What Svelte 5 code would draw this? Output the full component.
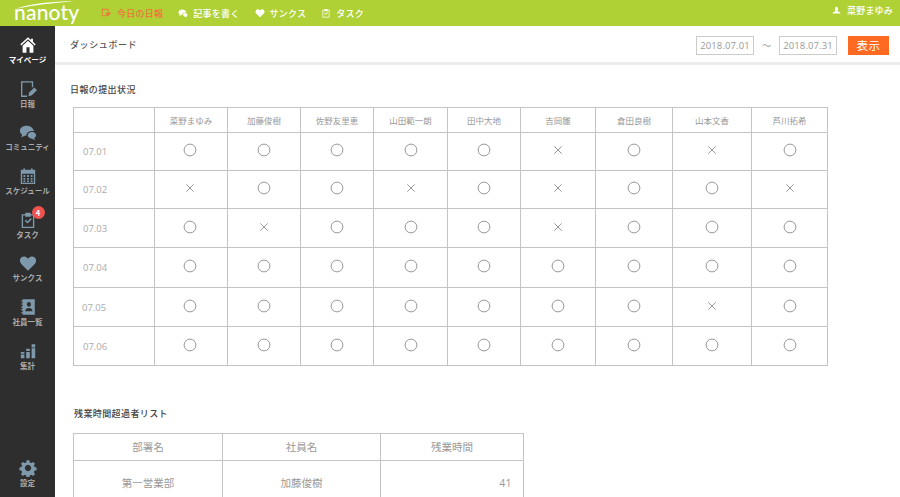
<script>
  const nav = [
    { id: 'home', label: 'マイページ', active: true },
    { id: 'report', label: '日報' },
    { id: 'chat', label: 'コミュニティ' },
    { id: 'cal', label: 'スケジュール' },
    { id: 'task', label: 'タスク', badge: 4 },
    { id: 'heart', label: 'サンクス' },
    { id: 'book', label: '社員一覧' },
    { id: 'bars', label: '集計' }
  ];
  const names = ['菜野まゆみ','加藤俊樹','佐野友里恵','山田範一朗','田中大地','吉岡雛','倉田良樹','山本文香','芦川拓希'];
  const rows = [
    ['07.01', 'oooooxoxo'],
    ['07.02', 'xooxoxoox'],
    ['07.03', 'oxoooxooo'],
    ['07.04', 'ooooooooo'],
    ['07.05', 'oooooooxo'],
    ['07.06', 'ooooooooo']
  ];
</script>

{#snippet icon(id)}
  <svg class="nav-icon" viewBox="0 0 20 20" aria-hidden="true">
    {#if id === 'home'}
      <path d="M10 1.500 1.500 9.300l1.100 1.200L10 3.700l7.400 6.800 1.100-1.200-3-2.800V3h-2.200v1.500Z"/>
      <path fill-rule="evenodd" d="M10 5.300 16 10.800V18.500H4V10.800ZM8.300 12.500v6h3.400v-6Z"/>
    {:else if id === 'report'}
      <path class="line" d="M9 18H3V2h12v6"/>
      <path d="m10.500 18 .8-4 5.700-5.700 3 3-5.700 5.700Z"/>
    {:else if id === 'chat'}
      <path d="M8.500 3C4 3 1 5.500 1 8.700c0 1.800 1 3.300 2.400 4.300L2.600 16l3.600-1.900c.6.100 1.200.2 1.800.2 0-3 2.900-5.500 6.500-5.500.8 0 1.500.1 2.100.3C15.800 5.400 12.500 3 8.500 3Z"/>
      <path d="M14.500 10c-2.800 0-4.800 1.700-4.800 3.700s2 3.700 4.800 3.700l3 1.400-.5-2.300c1.200-.7 2-1.700 2-2.800 0-2-2-3.700-4.500-3.700Z"/>
    {:else if id === 'cal'}
      <path fill-rule="evenodd" d="M2 3h3V1.500h1.500V3h7V1.500H15V3h3v16H2ZM3.500 7.500V17.500h13V7.500Z"/>
      <path d="M5 9h2v2H5ZM9 9h2v2H9ZM13 9h2v2h-2ZM5 12.200h2v2H5ZM9 12.200h2v2H9ZM13 12.200h2v2h-2ZM5 15h2v1.700H5ZM9 15h2v1.700H9ZM13 15h2v1.700h-2Z"/>
    {:else if id === 'task'}
      <path fill-rule="evenodd" d="M3 3.500h4V2h6v1.500h4V19H3ZM4.500 5V17.500h11V5H13v1.500H7V5Z"/>
      <path d="m6.500 11 1.200-1.200 1.800 1.800 3.500-3.700 1.200 1.200-4.700 4.900Z"/>
    {:else if id === 'heart'}
      <path d="M10 18.500 2.500 11C.5 9 .5 5.800 2.400 4c1.900-1.800 4.700-1.700 6.500.1L10 5.200l1.100-1.100c1.800-1.800 4.600-1.900 6.500-.1 1.900 1.800 1.900 5 0 7Z"/>
    {:else if id === 'book'}
      <path fill-rule="evenodd" d="M4 1.500h13.500v17H4V17H2.500v-1.200H4v-2.300H2.500v-1.200H4V10.700H2.500V9.500H4V7.200H2.500V6H4V4H2.500V2.800H4ZM11 4.500a2.300 2.600 0 1 0 .01 0ZM7 14.800h8c0-2.500-1.500-3.600-4-3.600s-4 1.100-4 3.600Z"/>
    {:else if id === 'bars'}
      <path d="M2 11h4v2H2ZM2 14h4v4H2ZM8 7.500h4V10H8ZM8 11h4v7H8ZM14 2.500h4V6h-4ZM14 7h4v11h-4Z"/>
    {:else}
      <path fill-rule="evenodd" d="m8.500 1.500h3l.5 2.300 1.700.7 2-1.300 2.100 2.100-1.300 2 .7 1.700 2.300.5v3l-2.300.5-.7 1.700 1.300 2-2.100 2.100-2-1.300-1.700.7-.5 2.300h-3l-.5-2.300-1.700-.7-2 1.300-2.100-2.100 1.300-2-.7-1.700-2.300-.5v-3l2.300-.5.7-1.700-1.300-2 2.100-2.100 2 1.300 1.700-.7ZM10 6.500a3.500 3.500 0 1 0 .01 0Z"/>
    {/if}
  </svg>
{/snippet}

<div class="app">
  <header class="top">
    <div class="logo">
      <svg class="arc" viewBox="0 0 64 10" aria-hidden="true"><path d="M1 9C18 3 40 1 63 1 40 3 20 5 1 9Z"/></svg>
      <span>nanoty</span>
    </div>
    <nav class="menu">
      <a class="current">
        <svg viewBox="0 0 12 12" aria-hidden="true"><path fill-rule="evenodd" d="M1 1h8v3.500L7 6.500 6 10H1ZM2 2v7h3.300l.8-3L8 4.100V2Z"/><path d="m6.500 10 .6-2.500 3-3 1.800 1.800-3 3Z"/></svg>
        今日の日報
      </a>
      <a>
        <svg viewBox="0 0 20 20" aria-hidden="true"><path d="M8.500 3C4 3 1 5.500 1 8.700c0 1.800 1 3.300 2.400 4.300L2.600 16l3.600-1.900c.6.100 1.200.2 1.800.2 0-3 2.900-5.500 6.500-5.500.8 0 1.500.1 2.100.3C15.800 5.400 12.500 3 8.500 3Z"/><path d="M14.500 10c-2.800 0-4.800 1.700-4.800 3.700s2 3.700 4.800 3.700l3 1.400-.5-2.300c1.200-.7 2-1.700 2-2.800 0-2-2-3.700-4.500-3.700Z"/></svg>
        記事を書く
      </a>
      <a>
        <svg viewBox="0 0 20 20" aria-hidden="true"><path d="M10 18.500 2.500 11C.5 9 .5 5.800 2.400 4c1.900-1.800 4.700-1.700 6.500.1L10 5.200l1.100-1.100c1.800-1.800 4.600-1.900 6.500-.1 1.900 1.800 1.900 5 0 7Z"/></svg>
        サンクス
      </a>
      <a>
        <svg viewBox="0 0 20 20" aria-hidden="true"><path fill-rule="evenodd" d="M3 3.500h4V2h6v1.500h4V19H3ZM4.500 5V17.500h11V5H13v1.500H7V5Z"/><path d="m6.500 11 1.200-1.200 1.800 1.800 3.500-3.700 1.200 1.200-4.700 4.900Z"/></svg>
        タスク
      </a>
    </nav>
    <div class="user">
      <svg viewBox="0 0 12 12" aria-hidden="true"><path d="M6 1a2.300 2.800 0 0 1 1.500 4.700v1.200L11 8.500V10H1V8.500l3.500-1.600V5.700A2.300 2.800 0 0 1 6 1Z"/></svg>
      菜野まゆみ
    </div>
  </header>

  <div class="body">
    <aside class="side">
      <div class="items">
        {#each nav as n}
          <div class="item" class:active={n.active}>
            <div class="icon-wrap">
              {@render icon(n.id)}
              {#if n.badge}<span class="badge">{n.badge}</span>{/if}
            </div>
            <span>{n.label}</span>
          </div>
        {/each}
      </div>
      <div class="item">
        <div class="icon-wrap">{@render icon('gear')}</div>
        <span>設定</span>
      </div>
    </aside>

    <main class="main">
      <div class="bar">
        <h1>ダッシュボード</h1>
        <div class="range">
          <span class="date">2018.07.01</span>
          <span class="tilde">～</span>
          <span class="date">2018.07.31</span>
          <button>表示</button>
        </div>
      </div>

      <section class="content">
        <h2>日報の提出状況</h2>
        <table class="status">
          <colgroup>
            <col class="c0"/><col class="c1"/><col class="c2"/><col class="c3"/><col class="c4"/><col class="c5"/><col class="c6"/><col class="c7"/><col class="c8"/><col class="c9"/>
          </colgroup>
          <thead>
            <tr><th></th>{#each names as name}<th>{name}</th>{/each}</tr>
          </thead>
          <tbody>
            {#each rows as [d, marks]}
              <tr>
                <td class="day">{d}</td>
                {#each marks.split('') as m}
                  <td>
                    {#if m === 'o'}
                      <svg class="mark" viewBox="0 0 14 14" aria-label="○"><circle cx="7" cy="7" r="5.900"/></svg>
                    {:else}
                      <svg class="mark" viewBox="0 0 14 14" aria-label="×"><path d="m3.300 3.300 7.400 7.400M10.700 3.300l-7.400 7.400"/></svg>
                    {/if}
                  </td>
                {/each}
              </tr>
            {/each}
          </tbody>
        </table>

        <h2 class="second">残業時間超過者リスト</h2>
        <table class="over">
          <colgroup><col class="o0"/><col class="o1"/><col class="o2"/></colgroup>
          <thead><tr><th>部署名</th><th>社員名</th><th>残業時間</th></tr></thead>
          <tbody><tr><td>第一営業部</td><td>加藤俊樹</td><td class="num">41</td></tr></tbody>
        </table>
      </section>
    </main>
  </div>
</div>

<style>
  :global(body) { margin: 0; background: #fff; }
  .app {
    width: 900px; height: 497px; overflow: hidden;
    display: flex; flex-direction: column;
    font-family: "Noto Sans CJK JP", "Noto Sans", sans-serif;
    color: #444;
  }
  .top {
    height: 26px; flex: none; background: #b0d136;
    display: flex; align-items: center; color: #fff; box-sizing: border-box;
  }
  .logo {
    width: 101px; flex: none; position: relative; height: 26px;
    padding-left: 14px; box-sizing: border-box;
  }
  .logo span {
    font-family: "Lato", "Open Sans", sans-serif;
    font-size: 21px; font-weight: 500; line-height: 25px; letter-spacing: .2px; color: #fff; display: block;
    margin-top: -1px;
  }
  .arc { position: absolute; left: 15px; top: 0; width: 60px; height: 10px; fill: #fff; }
  .menu { display: flex; align-items: center; gap: 15px; font-size: 9px; font-weight: 500; }
  .menu a { display: flex; align-items: center; gap: 5px; letter-spacing: .25px; }
  .menu svg { width: 10px; height: 10px; fill: #fff; }
  .menu .current { color: #f0703c; gap: 6px; }
  .menu .current svg { fill: #f0703c; }
  .user {
    margin-left: auto; margin-right: 7px; display: flex; align-items: center; gap: 6px;
    font-size: 9px; font-weight: 500; margin-top: -6px; letter-spacing: .2px;
  }
  .user svg { width: 9px; height: 9px; fill: #fff; }
  .body { flex: 1; display: flex; min-height: 0; }
  .side {
    width: 55px; flex: none; background: #2e2e2e;
    display: flex; flex-direction: column; justify-content: space-between;
    padding: 10px 0 7px; box-sizing: border-box;
  }
  .items { display: flex; flex-direction: column; gap: 12.700px; }
  .item {
    height: 31px; display: flex; flex-direction: column; align-items: center;
    font-size: 7.500px; font-weight: 700; color: #aaa; white-space: nowrap; line-height: 10px;
    gap: 1px;
  }
  .item.active { color: #fff; }
  .icon-wrap { position: relative; width: 18px; height: 18px; }
  .nav-icon { width: 18px; height: 18px; display: block; fill: #7f99ac; }
  .active .nav-icon { fill: #fff; }
  .line { stroke: #7f99ac; stroke-width: 1.500; fill: none; }
  .badge {
    position: absolute; left: 13px; top: -5px; width: 13px; height: 13px; border-radius: 50%;
    background: #ef5350; color: #fff; font-size: 7.500px; line-height: 13px; text-align: center; font-weight: 700;
  }
  .main { flex: 1; min-width: 0; }
  .bar {
    height: 36px; border-bottom: 3px solid #ececec; display: flex; align-items: center;
    justify-content: space-between; padding: 0 11px 0 15px;
  }
  h1 { font-size: 9px; font-weight: 500; letter-spacing: .6px; margin: 0; color: #555; }
  .range { display: flex; align-items: center; margin-top: 2px; }
  .date {
    width: 58px; height: 19px; box-sizing: border-box; border: 1px solid #ccc;
    font: 9.500px/17px "Open Sans", sans-serif; color: #999; text-align: center; letter-spacing: .1px;
  }
  .tilde { width: 25px; text-align: center; font-size: 9px; color: #999; }
  button {
    margin-left: 11px; width: 41px; height: 19px; border: 0; padding: 0;
    background: #ff6a22; color: #fff; font: 400 11.500px/19px "Noto Sans CJK JP", sans-serif; letter-spacing: .5px;
  }
  .content { padding: 18px 0 0 15px; }
  h2 { font-size: 9px; font-weight: 500; margin: 0; height: 14px; line-height: 14px; color: #444; letter-spacing: .4px; }
  table { border-collapse: collapse; table-layout: fixed; color: #999; }
  th, td { border: 1px solid #c4c4c4; padding: 0; text-align: center; font-weight: 400; box-sizing: border-box; }
  .status { margin: 10px 0 0 3px; width: 755px; }
  .status th { height: 25px; font-size: 8.500px; }
  .status td { height: 39px; }
  .status tbody tr:nth-child(-n+2) td { height: 38px; }
  .status tbody tr:nth-child(4) td { height: 40px; }
  .status td:nth-child(2) { padding-right: 3px; }
  .status .day { text-align: left; padding-left: 9px; font: 9.500px "Open Sans", sans-serif; color: #aaa; }
  .status tbody tr:nth-child(5) .day { padding-left: 8px; }
  .c0 { width: 81px; } .c1 { width: 73px; } .c2 { width: 73px; } .c3 { width: 73px; } .c4 { width: 74px; }
  .c5 { width: 73px; } .c6 { width: 75px; } .c7 { width: 77px; } .c8 { width: 79px; } .c9 { width: 76px; }
  .mark { width: 14px; height: 14px; display: block; margin: -3px auto 0; fill: none; stroke: #999; stroke-width: 1; }
  .second { margin: 41px 0 0 4px; }
  .over { margin: 12px 0 0 3px; width: 450px; }
  .over th { height: 27px; font-size: 10.500px; padding-bottom: 1px; }
  .over td { height: 47px; font-size: 10.500px; padding-bottom: 3px; }
  .over .num { text-align: right; padding-right: 11px; font-family: "Open Sans", sans-serif; letter-spacing: .4px; }
  .o0 { width: 149px; } .o1 { width: 158px; } .o2 { width: 143px; }
</style>
